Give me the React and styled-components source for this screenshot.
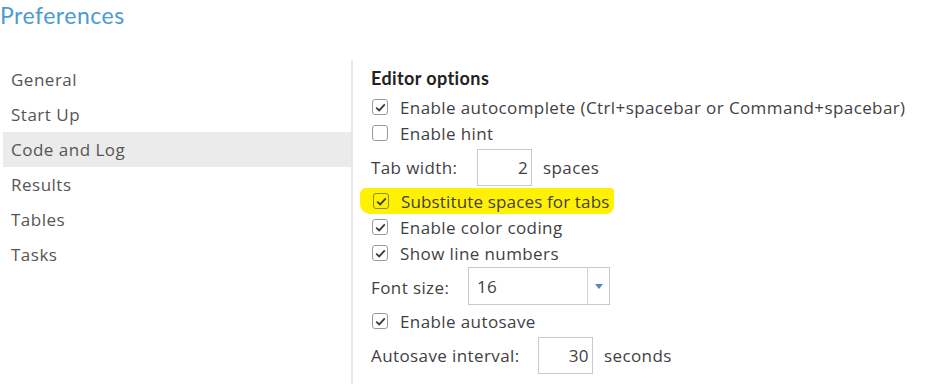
import React from 'react';
import styled, { createGlobalStyle } from 'styled-components';

const GlobalStyle = createGlobalStyle`
  html, body {
    margin: 0;
    padding: 0;
    background: #fff;
    font-family: "Open Sans", Lato, sans-serif;
    color: #3f3f45;
  }
`;

const Page = styled.div`
  width: 945px;
  height: 384px;
  overflow: hidden;
`;

const Title = styled.h1`
  margin: 0;
  height: 60px;
  font-family: Lato, sans-serif;
  font-size: 23px;
  font-weight: 400;
  color: #4a9bd2;
  line-height: 31px;
  letter-spacing: 0.5px;
`;

const Body = styled.div`
  display: flex;
  height: 324px;
`;

const Sidebar = styled.nav`
  width: 351px;
  padding-top: 2px;
  display: flex;
  flex-direction: column;
`;

const NavItem = styled.div`
  height: 35px;
  margin-left: 3px;
  padding-left: 8px;
  display: flex;
  align-items: center;
  font-size: 17px;
  letter-spacing: 0.5px;
  color: #555;
  background: ${p => (p.active ? '#ebebeb' : 'transparent')};
`;

const Panel = styled.section`
  flex: 1;
  border-left: 2px solid #e6e6e6;
  padding: 7px 0 0 18px;
  display: flex;
  flex-direction: column;
  font-size: 17px;
  letter-spacing: 0.4px;
`;

const Heading = styled.div`
  height: 22px;
  font-family: Lato, sans-serif;
  font-size: 18px;
  font-weight: 700;
  letter-spacing: 0.4px;
  color: #222;
  line-height: 22px;
  margin-bottom: 5px;
`;

const CheckRow = styled.label`
  height: 26px;
  display: flex;
  align-items: center;
  gap: 12px;
  align-self: flex-start;
  ${p =>
    p.highlight &&
    `
    background: #fff200;
    margin-left: -11px;
    padding: 0 5px 0 12px;
    letter-spacing: 0.15px;
    border-radius: 6px 3px 8px 10px;
  `}
`;

const Box = styled.span`
  width: 14px;
  height: 14px;
  margin-left: 1px;
  border: 1.5px solid ${p => (p.highlight ? '#8a8a2a' : '#9a9a9a')};
  border-radius: 3px;
  display: flex;
  align-items: center;
  justify-content: center;
  background: ${p => (p.highlight ? 'transparent' : '#fff')};
`;

const FieldRow = styled.div`
  height: 42px;
  display: flex;
  align-items: center;
`;

const Label = styled.span`
  width: ${p => p.width}px;
  flex-shrink: 0;
`;

const NumberBox = styled.div`
  width: 55px;
  height: 37px;
  box-sizing: border-box;
  border: 1px solid #c9c9c9;
  display: flex;
  align-items: center;
  justify-content: flex-end;
  padding-right: 3px;
`;

const Unit = styled.span`
  margin-left: ${p => p.gap}px;
`;

const Select = styled.div`
  width: 142px;
  height: 38px;
  margin-bottom: 2px;
  box-sizing: border-box;
  border: 1px solid #c9c9c9;
  display: flex;
  align-items: stretch;
`;

const SelectValue = styled.div`
  flex: 1;
  display: flex;
  align-items: center;
  padding-left: 8px;
  border-right: 1px solid #d3d3d3;
`;

const SelectArrow = styled.div`
  width: 21px;
  display: flex;
  align-items: center;
  justify-content: center;
`;

const Check = ({ on }) => (
  <svg width="11" height="9" viewBox="0 0 11 9">
    {on && (
      <path d="M1.2 4.6 L4.2 7.4 L9.8 1.4" fill="none" stroke="#3a3a3a" strokeWidth="1.8" />
    )}
  </svg>
);

const Option = ({ on, highlight, children }) => (
  <CheckRow highlight={highlight}>
    <Box highlight={highlight}>
      <Check on={on} />
    </Box>
    {children}
  </CheckRow>
);

const navItems = ['General', 'Start Up', 'Code and Log', 'Results', 'Tables', 'Tasks'];

export default function App() {
  return (
    <Page>
      <GlobalStyle />
      <Title>Preferences</Title>
      <Body>
        <Sidebar>
          {navItems.map(item => (
            <NavItem key={item} active={item === 'Code and Log'}>
              {item}
            </NavItem>
          ))}
        </Sidebar>
        <Panel>
          <Heading>Editor options</Heading>
          <Option on>Enable autocomplete (Ctrl+spacebar or Command+spacebar)</Option>
          <Option>Enable hint</Option>
          <FieldRow>
            <Label width={106}>Tab width:</Label>
            <NumberBox>2</NumberBox>
            <Unit gap={11}>spaces</Unit>
          </FieldRow>
          <Option on highlight>
            Substitute spaces for tabs
          </Option>
          <Option on>Enable color coding</Option>
          <Option on>Show line numbers</Option>
          <FieldRow>
            <Label width={97}>Font size:</Label>
            <Select>
              <SelectValue>16</SelectValue>
              <SelectArrow>
                <svg width="8" height="5" viewBox="0 0 8 5">
                  <path d="M0 0 H8 L4 5 Z" fill="#5b87b5" />
                </svg>
              </SelectArrow>
            </Select>
          </FieldRow>
          <Option on>Enable autosave</Option>
          <FieldRow>
            <Label width={167}>Autosave interval:</Label>
            <NumberBox>30</NumberBox>
            <Unit gap={11}>seconds</Unit>
          </FieldRow>
        </Panel>
      </Body>
    </Page>
  );
}
